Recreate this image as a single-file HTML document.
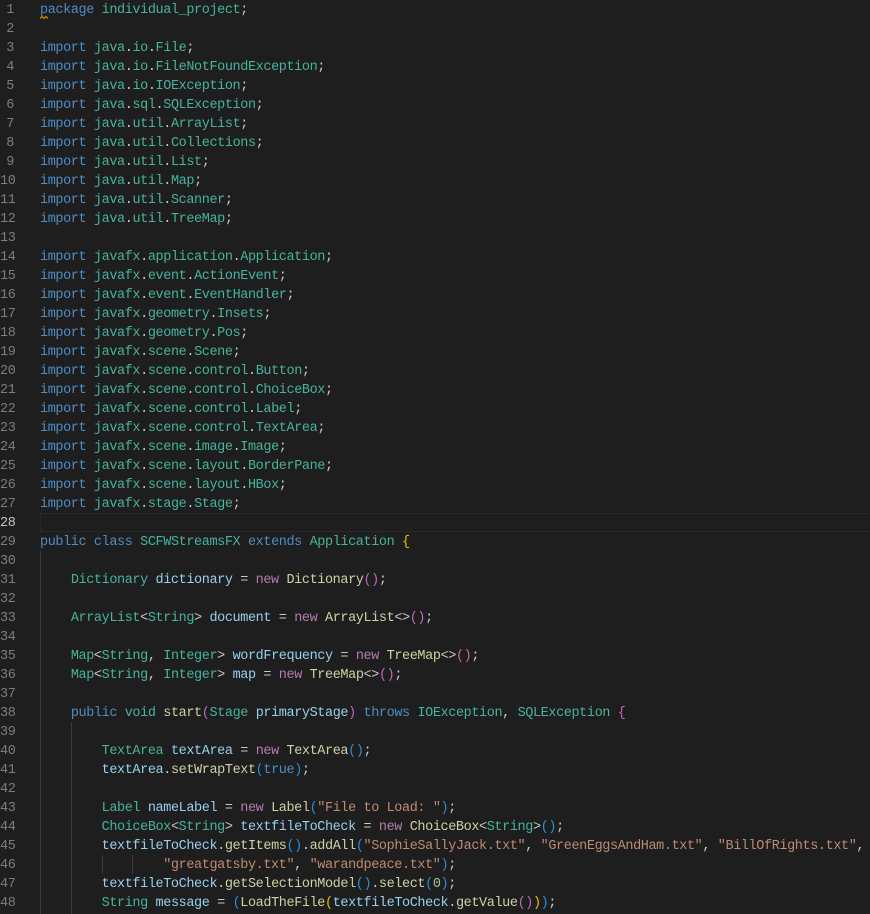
<!DOCTYPE html>
<html><head><meta charset="utf-8"><style>
html,body{margin:0;padding:0;background:#1e1e1e;width:870px;height:914px;overflow:hidden}
pre{margin:0;position:absolute;top:1px;font:13.5px/19px "Liberation Mono",monospace;letter-spacing:-0.4px;color:#c8c8c8}
#n{left:0;width:14px;text-align:right;color:#7d7d7d}
#n b{font-weight:normal;color:#c6c6c6}
#c{left:40px;white-space:pre}
.k{color:#4f8cc2}.t{color:#46b39d}.v{color:#95d0ee}.f{color:#d0d0a4}.s{color:#c08a70}.p{color:#b27cae}.m{color:#a8bf9c}
.g{color:#e6c200}.o{color:#c265bc}.b{color:#2a8fd8}
.l{position:absolute;width:1px;background:#3c3c3c}
</style></head><body>
<div style="position:absolute;left:40px;right:0;top:513px;height:17px;border:1px solid #282828;border-right:0"></div>
<div class="l" style="left:40px;top:551px;height:363px"></div>
<div class="l" style="left:71px;top:722px;height:192px"></div>
<div class="l" style="left:102px;top:855px;height:19px"></div>
<div class="l" style="left:132px;top:855px;height:19px"></div>
<svg style="position:absolute;left:40px;top:15px" width="8" height="5"><path d="M0 3.5 L2 1.5 L4 3.5 L6 1.5 L8 3.5" fill="none" stroke="#cca700" stroke-width="1"/></svg>
<pre id="n">1
2
3
4
5
6
7
8
9
10
11
12
13
14
15
16
17
18
19
20
21
22
23
24
25
26
27
<b>28</b>
29
30
31
32
33
34
35
36
37
38
39
40
41
42
43
44
45
46
47
48</pre>
<pre id="c"><span class="k">package</span> <span class="t">individual_project</span>;

<span class="k">import</span> <span class="t">java</span>.<span class="t">io</span>.<span class="t">File</span>;
<span class="k">import</span> <span class="t">java</span>.<span class="t">io</span>.<span class="t">FileNotFoundException</span>;
<span class="k">import</span> <span class="t">java</span>.<span class="t">io</span>.<span class="t">IOException</span>;
<span class="k">import</span> <span class="t">java</span>.<span class="t">sql</span>.<span class="t">SQLException</span>;
<span class="k">import</span> <span class="t">java</span>.<span class="t">util</span>.<span class="t">ArrayList</span>;
<span class="k">import</span> <span class="t">java</span>.<span class="t">util</span>.<span class="t">Collections</span>;
<span class="k">import</span> <span class="t">java</span>.<span class="t">util</span>.<span class="t">List</span>;
<span class="k">import</span> <span class="t">java</span>.<span class="t">util</span>.<span class="t">Map</span>;
<span class="k">import</span> <span class="t">java</span>.<span class="t">util</span>.<span class="t">Scanner</span>;
<span class="k">import</span> <span class="t">java</span>.<span class="t">util</span>.<span class="t">TreeMap</span>;

<span class="k">import</span> <span class="t">javafx</span>.<span class="t">application</span>.<span class="t">Application</span>;
<span class="k">import</span> <span class="t">javafx</span>.<span class="t">event</span>.<span class="t">ActionEvent</span>;
<span class="k">import</span> <span class="t">javafx</span>.<span class="t">event</span>.<span class="t">EventHandler</span>;
<span class="k">import</span> <span class="t">javafx</span>.<span class="t">geometry</span>.<span class="t">Insets</span>;
<span class="k">import</span> <span class="t">javafx</span>.<span class="t">geometry</span>.<span class="t">Pos</span>;
<span class="k">import</span> <span class="t">javafx</span>.<span class="t">scene</span>.<span class="t">Scene</span>;
<span class="k">import</span> <span class="t">javafx</span>.<span class="t">scene</span>.<span class="t">control</span>.<span class="t">Button</span>;
<span class="k">import</span> <span class="t">javafx</span>.<span class="t">scene</span>.<span class="t">control</span>.<span class="t">ChoiceBox</span>;
<span class="k">import</span> <span class="t">javafx</span>.<span class="t">scene</span>.<span class="t">control</span>.<span class="t">Label</span>;
<span class="k">import</span> <span class="t">javafx</span>.<span class="t">scene</span>.<span class="t">control</span>.<span class="t">TextArea</span>;
<span class="k">import</span> <span class="t">javafx</span>.<span class="t">scene</span>.<span class="t">image</span>.<span class="t">Image</span>;
<span class="k">import</span> <span class="t">javafx</span>.<span class="t">scene</span>.<span class="t">layout</span>.<span class="t">BorderPane</span>;
<span class="k">import</span> <span class="t">javafx</span>.<span class="t">scene</span>.<span class="t">layout</span>.<span class="t">HBox</span>;
<span class="k">import</span> <span class="t">javafx</span>.<span class="t">stage</span>.<span class="t">Stage</span>;

<span class="k">public</span> <span class="k">class</span> <span class="t">SCFWStreamsFX</span> <span class="k">extends</span> <span class="t">Application</span> <span class="g">{</span>

    <span class="t">Dictionary</span> <span class="v">dictionary</span> = <span class="p">new</span> <span class="f">Dictionary</span><span class="o">()</span>;

    <span class="t">ArrayList</span>&lt;<span class="t">String</span>&gt; <span class="v">document</span> = <span class="p">new</span> <span class="f">ArrayList</span>&lt;&gt;<span class="o">()</span>;

    <span class="t">Map</span>&lt;<span class="t">String</span>, <span class="t">Integer</span>&gt; <span class="v">wordFrequency</span> = <span class="p">new</span> <span class="f">TreeMap</span>&lt;&gt;<span class="o">()</span>;
    <span class="t">Map</span>&lt;<span class="t">String</span>, <span class="t">Integer</span>&gt; <span class="v">map</span> = <span class="p">new</span> <span class="f">TreeMap</span>&lt;&gt;<span class="o">()</span>;

    <span class="k">public</span> <span class="t">void</span> <span class="f">start</span><span class="o">(</span><span class="t">Stage</span> <span class="v">primaryStage</span><span class="o">)</span> <span class="k">throws</span> <span class="t">IOException</span>, <span class="t">SQLException</span> <span class="o">{</span>

        <span class="t">TextArea</span> <span class="v">textArea</span> = <span class="p">new</span> <span class="f">TextArea</span><span class="b">()</span>;
        <span class="v">textArea</span>.<span class="f">setWrapText</span><span class="b">(</span><span class="k">true</span><span class="b">)</span>;

        <span class="t">Label</span> <span class="v">nameLabel</span> = <span class="p">new</span> <span class="f">Label</span><span class="b">(</span><span class="s">"File to Load: "</span><span class="b">)</span>;
        <span class="t">ChoiceBox</span>&lt;<span class="t">String</span>&gt; <span class="v">textfileToCheck</span> = <span class="p">new</span> <span class="f">ChoiceBox</span>&lt;<span class="t">String</span>&gt;<span class="b">()</span>;
        <span class="v">textfileToCheck</span>.<span class="f">getItems</span><span class="b">()</span>.<span class="f">addAll</span><span class="b">(</span><span class="s">"SophieSallyJack.txt"</span>, <span class="s">"GreenEggsAndHam.txt"</span>, <span class="s">"BillOfRights.txt"</span>,
                <span class="s">"greatgatsby.txt"</span>, <span class="s">"warandpeace.txt"</span><span class="b">)</span>;
        <span class="v">textfileToCheck</span>.<span class="f">getSelectionModel</span><span class="b">()</span>.<span class="f">select</span><span class="b">(</span><span class="m">0</span><span class="b">)</span>;
        <span class="t">String</span> <span class="v">message</span> = <span class="b">(</span><span class="f">LoadTheFile</span><span class="g">(</span><span class="v">textfileToCheck</span>.<span class="f">getValue</span><span class="o">()</span><span class="g">)</span><span class="b">)</span>;</pre>
</body></html>
